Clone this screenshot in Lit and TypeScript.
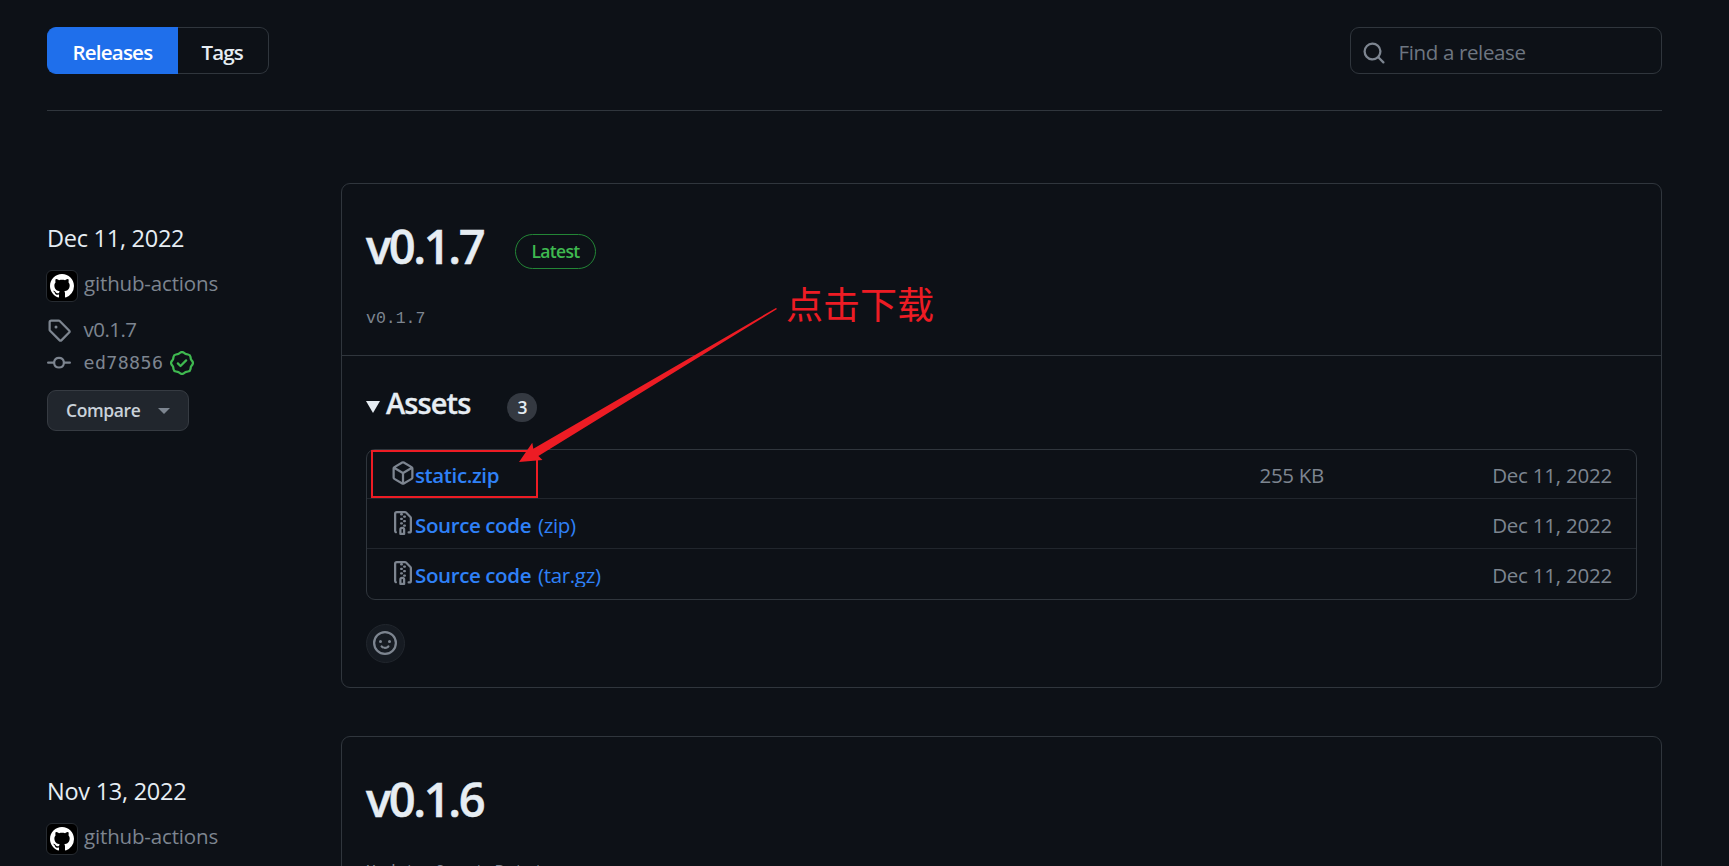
import { LitElement, html, svg, css, nothing } from "lit";
import { customElement, property } from "lit/decorators.js";
import { classMap } from "lit/directives/class-map.js";

const ICONS = {
  search:
    "M10.68 11.74a6 6 0 0 1-7.922-8.982 6 6 0 0 1 8.982 7.922l3.04 3.04a.749.749 0 0 1-.326 1.275.749.749 0 0 1-.734-.215ZM11.5 7a4.499 4.499 0 1 0-8.997 0A4.499 4.499 0 0 0 11.5 7Z",
  tag: "M1 7.775V2.75C1 1.784 1.784 1 2.75 1h5.025c.464 0 .91.184 1.238.513l6.25 6.25a1.75 1.75 0 0 1 0 2.474l-5.026 5.026a1.75 1.75 0 0 1-2.474 0l-6.25-6.25A1.752 1.752 0 0 1 1 7.775Zm1.5 0c0 .066.026.13.073.177l6.25 6.25a.25.25 0 0 0 .354 0l5.025-5.025a.25.25 0 0 0 0-.354l-6.25-6.25a.25.25 0 0 0-.177-.073H2.75a.25.25 0 0 0-.25.25ZM6 5a1 1 0 1 1 0 2 1 1 0 0 1 0-2Z",
  commit:
    "M11.93 8.5a4.002 4.002 0 0 1-7.86 0H.75a.75.75 0 0 1 0-1.5h3.32a4.002 4.002 0 0 1 7.86 0h3.32a.75.75 0 0 1 0 1.5Zm-1.43-.75a2.5 2.5 0 1 0-5 0 2.5 2.5 0 0 0 5 0Z",
  verified:
    "m9.585.52.929.68c.153.112.331.186.518.215l1.138.175a2.678 2.678 0 0 1 2.24 2.24l.174 1.139c.029.187.103.365.215.518l.68.928a2.677 2.677 0 0 1 0 3.17l-.68.928a1.174 1.174 0 0 0-.215.518l-.175 1.138a2.678 2.678 0 0 1-2.241 2.241l-1.138.175a1.17 1.17 0 0 0-.518.215l-.928.68a2.677 2.677 0 0 1-3.17 0l-.928-.68a1.174 1.174 0 0 0-.518-.215L3.83 14.41a2.678 2.678 0 0 1-2.24-2.24l-.175-1.138a1.17 1.17 0 0 0-.215-.518l-.68-.928a2.677 2.677 0 0 1 0-3.17l.68-.928c.112-.153.186-.331.215-.518l.175-1.14a2.678 2.678 0 0 1 2.24-2.24l1.139-.175c.187-.029.365-.103.518-.215l.928-.68a2.677 2.677 0 0 1 3.17 0ZM7.303 1.728l-.927.68a2.67 2.67 0 0 1-1.18.489l-1.137.174a1.179 1.179 0 0 0-.987.987l-.174 1.136a2.677 2.677 0 0 1-.489 1.18l-.68.928a1.18 1.18 0 0 0 0 1.394l.68.927c.256.348.424.753.489 1.18l.174 1.137c.078.509.478.909.987.987l1.136.174a2.67 2.67 0 0 1 1.18.489l.928.68c.414.305.979.305 1.394 0l.927-.68a2.67 2.67 0 0 1 1.18-.489l1.137-.174a1.18 1.18 0 0 0 .987-.987l.174-1.136a2.67 2.67 0 0 1 .489-1.18l.68-.928a1.176 1.176 0 0 0 0-1.394l-.68-.927a2.686 2.686 0 0 1-.489-1.18l-.174-1.137a1.179 1.179 0 0 0-.987-.987l-1.136-.174a2.677 2.677 0 0 1-1.18-.489l-.928-.68a1.176 1.176 0 0 0-1.394 0ZM11.28 6.78l-3.75 3.75a.75.75 0 0 1-1.06 0L4.72 8.78a.751.751 0 0 1 .018-1.042.751.751 0 0 1 1.042-.018L7 8.94l3.22-3.22a.751.751 0 0 1 1.042.018.751.751 0 0 1 .018 1.042Z",
  package:
    "m8.878.392 5.25 3.045c.54.314.872.89.872 1.514v6.098a1.75 1.75 0 0 1-.872 1.514l-5.25 3.045a1.75 1.75 0 0 1-1.756 0l-5.25-3.045A1.75 1.75 0 0 1 1 11.049V4.951c0-.624.332-1.201.872-1.514L7.122.392a1.75 1.75 0 0 1 1.756 0ZM7.875 1.69l-4.63 2.685L8 7.133l4.755-2.758-4.63-2.685a.248.248 0 0 0-.25 0ZM2.5 5.677v5.372c0 .09.047.171.125.216l4.625 2.683V8.432Zm6.25 8.271 4.625-2.683a.25.25 0 0 0 .125-.216V5.677L8.75 8.432Z",
  zip: "M3.5 1.75v11.5c0 .09.048.173.126.217a.75.75 0 0 1-.752 1.298A1.748 1.748 0 0 1 2 13.25V1.75C2 .784 2.784 0 3.75 0h5.586c.464 0 .909.185 1.237.513l2.914 2.914c.329.328.513.773.513 1.237v8.586A1.75 1.75 0 0 1 12.25 15h-.5a.75.75 0 0 1 0-1.5h.5a.25.25 0 0 0 .25-.25V4.664a.25.25 0 0 0-.073-.177L9.513 1.573a.25.25 0 0 0-.177-.073H7.25a.75.75 0 0 1 0 1.5h-.5a.75.75 0 0 1 0-1.5h-3a.25.25 0 0 0-.25.25Zm3.75 8.75h.5c.966 0 1.75.784 1.75 1.75v3a.75.75 0 0 1-.75.75h-2.5a.75.75 0 0 1-.75-.75v-3c0-.966.784-1.75 1.75-1.75ZM6 5.25a.75.75 0 0 1 .75-.75h.5a.75.75 0 0 1 0 1.5h-.5A.75.75 0 0 1 6 5.25Zm.75 2.25h.5a.75.75 0 0 1 0 1.5h-.5a.75.75 0 0 1 0-1.5ZM8 3.75A.75.75 0 0 1 8.75 3h.5a.75.75 0 0 1 0 1.5h-.5A.75.75 0 0 1 8 3.75ZM8.75 6h.5a.75.75 0 0 1 0 1.5h-.5a.75.75 0 0 1 0-1.5ZM8 9.75A.75.75 0 0 1 8.75 9h.5a.75.75 0 0 1 0 1.5h-.5A.75.75 0 0 1 8 9.75Zm-1 2.5v2.25h1v-2.25a.25.25 0 0 0-.25-.25h-.5a.25.25 0 0 0-.25.25Z",
  smiley:
    "M8 0a8 8 0 1 1 0 16A8 8 0 0 1 8 0ZM1.5 8a6.5 6.5 0 1 0 13 0 6.5 6.5 0 0 0-13 0Zm3.82 1.636a.75.75 0 0 1 1.038.175l.007.009c.103.118.22.222.35.31.264.178.683.37 1.285.37.602 0 1.02-.192 1.285-.371.13-.088.247-.192.35-.31l.007-.008a.75.75 0 0 1 1.222.87l-.614-.43c.614.43.614.43.613.431v.001l-.001.002-.002.003-.005.007-.014.019a2.066 2.066 0 0 1-.184.213c-.16.166-.338.316-.53.445-.63.418-1.37.638-2.127.629-.946 0-1.652-.308-2.126-.63a3.331 3.331 0 0 1-.715-.657l-.014-.02-.005-.006-.002-.003v-.002h-.001l.613-.432-.614.43a.75.75 0 0 1 .183-1.044ZM12 7a1 1 0 1 1-2 0 1 1 0 0 1 2 0ZM5 8a1 1 0 1 1 0-2 1 1 0 0 1 0 2Z",
  github:
    "M8 0C3.58 0 0 3.58 0 8c0 3.54 2.29 6.53 5.47 7.59.4.07.55-.17.55-.38 0-.19-.01-.82-.01-1.49-2.01.37-2.53-.49-2.69-.94-.09-.23-.48-.94-.82-1.13-.28-.15-.68-.52-.01-.53.63-.01 1.08.58 1.23.82.72 1.21 1.87.87 2.33.66.07-.52.28-.87.51-1.07-1.78-.2-3.64-.89-3.64-3.95 0-.87.31-1.59.82-2.15-.08-.2-.36-1.02.08-2.12 0 0 .67-.21 2.2.82.64-.18 1.32-.27 2-.27.68 0 1.36.09 2 .27 1.53-1.04 2.2-.82 2.2-.82.44 1.1.16 1.92.08 2.12.51.56.82 1.27.82 2.15 0 3.07-1.87 3.75-3.65 3.95.29.25.54.73.54 1.48 0 1.07-.01 1.93-.01 2.2 0 .21.15.46.55.38A8.013 8.013 0 0 0 16 8c0-4.42-3.58-8-8-8z",
};

type IconName = keyof typeof ICONS;

interface Asset {
  icon: IconName;
  name: string;
  format?: string;
  size?: string;
  date: string;
}

interface Release {
  version: string;
  date: string;
  author: string;
  commit: string;
  notes: string;
  latest?: boolean;
  assets: Asset[];
}

const RELEASES: Release[] = [
  {
    version: "v0.1.7",
    date: "Dec 11, 2022",
    author: "github-actions",
    commit: "ed78856",
    notes: "v0.1.7",
    latest: true,
    assets: [
      { icon: "package", name: "static.zip", size: "255 KB", date: "Dec 11, 2022" },
      { icon: "zip", name: "Source code", format: "(zip)", date: "Dec 11, 2022" },
      { icon: "zip", name: "Source code", format: "(tar.gz)", date: "Dec 11, 2022" },
    ],
  },
  {
    version: "v0.1.6",
    date: "Nov 13, 2022",
    author: "github-actions",
    commit: "",
    notes: "Update Guest Bot t",
    assets: [],
  },
];

function icon(name: IconName) {
  return svg`<svg class="icon" viewBox="0 0 16 16" aria-hidden="true"><path d=${ICONS[name]}></path></svg>`;
}

const iconStyles = css`
  .icon {
    display: block;
    flex: none;
    width: 24px;
    height: 24px;
    fill: #7d8590;
  }
`;

/**
 * Date, author, tag and commit shown to the left of a release.
 */
@customElement("release-meta")
export class ReleaseMeta extends LitElement {
  @property({ attribute: false })
  release!: Release;

  static styles = [
    iconStyles,
    css`
      :host {
        display: block;
        padding-top: 37px;
        color: #7d8590;
      }

      .date {
        color: #e6edf3;
        font-size: 23.5px;
        letter-spacing: -0.26px;
        line-height: 36px;
      }

      .author {
        display: flex;
        gap: 6px;
        margin: 14px 0 0 -1px;
        line-height: 26px;
        letter-spacing: -0.16px;
      }

      .avatar {
        box-sizing: border-box;
        display: grid;
        place-items: center;
        width: 32px;
        height: 32px;
        border: 1px solid #262b31;
        border-radius: 6px;
        background: #000;
      }

      .avatar .icon {
        fill: #fff;
      }

      .row {
        display: flex;
        gap: 12.5px;
        height: 24px;
        line-height: 24px;
      }

      .tag {
        margin-top: 15px;
        letter-spacing: -0.53px;
      }

      .tag .icon {
        margin-top: 1px;
      }

      .commit {
        margin-top: 10px;
      }

      .sha {
        font-family: "DejaVu Sans Mono", monospace;
        font-size: 18.3px;
        letter-spacing: 0.4px;
      }

      .commit .verified {
        margin-left: -6px;
      }

      .verified .icon {
        fill: #3fb950;
      }

      .compare {
        box-sizing: border-box;
        display: flex;
        align-items: center;
        width: 142px;
        height: 41px;
        margin-top: 15px;
        padding: 0 18px;
        justify-content: space-between;
        border: 1px solid #363b42;
        border-radius: 9px;
        background: #21262d;
        color: #c9d1d9;
        font: 600 17.5px/39px "Open Sans", sans-serif;
        letter-spacing: -0.39px;
      }

      .caret {
        border: 6px solid transparent;
        border-top-color: #7d8590;
        border-bottom: 0;
      }
    `,
  ];

  render() {
    const { date, author, version, commit } = this.release;
    return html`
      <div class="date">${date}</div>
      <div class="author">
        <span class="avatar">${icon("github")}</span>
        <span>${author}</span>
      </div>
      <div class="row tag">${icon("tag")}<span>${version}</span></div>
      <div class="row commit">
        ${icon("commit")}
        <span class="sha">${commit}</span>
        <span class="verified">${icon("verified")}</span>
      </div>
      <button class="compare" type="button">Compare <span class="caret"></span></button>
    `;
  }
}

/**
 * Bordered box with the release notes and its downloadable assets.
 */
@customElement("release-card")
export class ReleaseCard extends LitElement {
  @property({ attribute: false })
  release!: Release;

  static styles = [
    iconStyles,
    css`
      :host {
        display: block;
        border: 1px solid #30363d;
        border-radius: 9px;
        color: #e6edf3;
      }

      .header {
        padding: 26px 24px 22px;
      }

      .title {
        display: flex;
        align-items: flex-start;
        gap: 32px;
      }

      h1 {
        margin: 0;
        font-size: 47px;
        font-weight: 600;
        line-height: 72px;
        letter-spacing: -2.35px;
        -webkit-text-stroke: 0.5px #e6edf3;
      }

      .latest {
        margin-top: 24px;
        padding: 0 15px;
        border: 1px solid #238636;
        border-radius: 18px;
        color: #3fb950;
        font-size: 17.5px;
        font-weight: 600;
        line-height: 33px;
        letter-spacing: -0.65px;
      }

      .notes {
        margin-top: 23px;
        color: #7d8590;
        font-family: "Liberation Mono", monospace;
        font-size: 16.5px;
        line-height: 28px;
      }

      .body {
        padding: 24px;
        border-top: 1px solid #30363d;
      }

      .summary {
        display: flex;
        align-items: flex-start;
      }

      .marker {
        margin: 21px 6px 0 0;
        border: 7px solid transparent;
        border-top: 12px solid #e6edf3;
        border-bottom: 0;
      }

      h2 {
        margin: 0;
        font-size: 29px;
        font-weight: 600;
        line-height: 45px;
        letter-spacing: -0.88px;
        -webkit-text-stroke: 0.3px #e6edf3;
      }

      .counter {
        width: 30px;
        height: 29px;
        margin: 13px 0 0 37px;
        border-radius: 15px;
        background: #343941;
        font-size: 17.5px;
        font-weight: 600;
        line-height: 29px;
        text-align: center;
      }

      .assets {
        margin: 24px 0 0;
        padding: 0;
        border: 1px solid #30363d;
        border-radius: 9px;
        list-style: none;
      }

      .asset {
        box-sizing: border-box;
        display: flex;
        height: 50px;
        padding: 14px 24px 0;
        line-height: 24px;
        color: #7d8590;
      }

      .asset:first-child {
        height: 49px;
        padding-top: 13px;
      }

      .asset.divided {
        border-bottom: 1px solid #21262d;
      }

      .asset .icon {
        margin-top: -2px;
      }

      .name {
        display: flex;
        flex: 1;
        gap: 7px;
        height: 24px;
        color: #2f81f7;
        letter-spacing: -0.34px;
      }

      .asset:last-child .name {
        overflow: hidden;
      }

      .name b {
        font-weight: 600;
        letter-spacing: -0.38px;
      }

      .size {
        letter-spacing: -0.3px;
      }

      .when {
        width: 288px;
        text-align: right;
        letter-spacing: -0.22px;
      }

      .react {
        box-sizing: border-box;
        display: flex;
        width: 39px;
        height: 39px;
        margin-top: 24px;
        padding: 6px;
        border: 1px solid #21262d;
        border-radius: 50%;
        background: #161b22;
      }
    `,
  ];

  private renderAssets(assets: Asset[]) {
    return html`
      <div class="body">
        <div class="summary">
          <span class="marker"></span>
          <h2>Assets</h2>
          <span class="counter">${assets.length}</span>
        </div>
        <ul class="assets">
          ${assets.map(
            (asset, i) => html`
              <li class=${classMap({ asset: true, divided: i < assets.length - 1 })}>
                ${icon(asset.icon)}
                <span class="name">
                  <b>${asset.name}</b>
                  ${asset.format ? html`<span>${asset.format}</span>` : nothing}
                </span>
                <span class="size">${asset.size ?? nothing}</span>
                <span class="when">${asset.date}</span>
              </li>
            `
          )}
        </ul>
        <button class="react" type="button" aria-label="Add reaction">${icon("smiley")}</button>
      </div>
    `;
  }

  render() {
    const { version, latest, notes, assets } = this.release;
    return html`
      <div class="header">
        <div class="title">
          <h1>${version}</h1>
          ${latest ? html`<span class="latest">Latest</span>` : nothing}
        </div>
        <div class="notes">${notes}</div>
      </div>
      ${assets.length ? this.renderAssets(assets) : nothing}
    `;
  }
}

@customElement("app-root")
export class AppRoot extends LitElement {
  static styles = [
    iconStyles,
    css`
      :host {
        position: relative;
        display: block;
        box-sizing: border-box;
        height: 866px;
        overflow: hidden;
        padding: 27px 67px 0 47px;
        background: #0d1117;
        font-family: "Open Sans", "Noto Sans", sans-serif;
        font-size: 20.5px;
      }

      .toolbar {
        display: flex;
        justify-content: space-between;
        padding-bottom: 36px;
        border-bottom: 1px solid #30363d;
      }

      .tabs {
        display: flex;
      }

      .tab {
        box-sizing: border-box;
        height: 47px;
        border: 1px solid #30363d;
        border-left: 0;
        border-radius: 0 9px 9px 0;
        padding: 1px 0 0 23.5px;
        width: 91px;
        color: #e6edf3;
        font-weight: 600;
        line-height: 46px;
        letter-spacing: -0.9px;
      }

      .tab.selected {
        width: 131px;
        padding-left: 24.5px;
        border: 1px solid #1f6feb;
        border-right: 0;
        border-radius: 9px 0 0 9px;
        background: #1f6feb;
        color: #fff;
        letter-spacing: -0.78px;
      }

      .search {
        box-sizing: border-box;
        display: flex;
        gap: 13px;
        width: 312px;
        height: 47px;
        padding: 1px 0 0 10.5px;
        border: 1px solid #30363d;
        border-radius: 9px;
        color: #6e7681;
        line-height: 46px;
        letter-spacing: -0.36px;
      }

      .search .icon {
        margin-top: 12px;
      }

      .releases {
        display: grid;
        grid-template-columns: 294px 1fr;
        row-gap: 48px;
        margin-top: 72px;
      }

      .annotation {
        position: absolute;
        top: 0;
        left: 0;
      }

      .annotation text {
        fill: #ed1c24;
        font: 37px "Noto Sans CJK SC", sans-serif;
      }
    `,
  ];

  render() {
    return html`
      <div class="toolbar">
        <div class="tabs">
          <span class="tab selected">Releases</span>
          <span class="tab">Tags</span>
        </div>
        <div class="search">${icon("search")}<span>Find a release</span></div>
      </div>
      <div class="releases">
        ${RELEASES.map(
          (release) => html`
            <release-meta .release=${release}></release-meta>
            <release-card .release=${release}></release-card>
          `
        )}
      </div>
      <svg class="annotation" width="1729" height="866" viewBox="0 0 1729 866">
        <rect x="372" y="451" width="165" height="46" fill="none" stroke="#ed1c24" stroke-width="2"></rect>
        <path
          d="M519 462 532.3 442.7 533.3 448.8 776 308 777 309 538.4 456 542.5 460Z"
          fill="#ed1c24"
        ></path>
        <text x="786" y="319">点击下载</text>
      </svg>
    `;
  }
}
